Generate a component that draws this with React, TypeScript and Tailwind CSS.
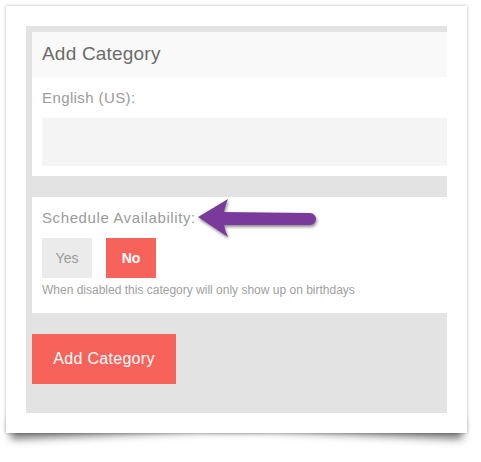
import React from 'react';

function Arrow() {
  return (
    <svg
      width="125"
      height="47"
      viewBox="0 0 125 47"
      className="absolute left-[163px] top-[-2px] drop-shadow-[1px_2px_1.5px_rgba(0,0,0,0.45)]"
    >
      <path
        d="M3 22 L33 4 Q30 11 29 17 L115 18 A6 6 0 0 1 115 30 L29 30 Q30 36 33 42 Z"
        fill="#7a3a9c"
      />
    </svg>
  );
}

export default function App() {
  return (
    <div className="w-[481px] h-[462px] bg-white font-['Liberation_Sans',Arial,sans-serif] pt-[6px] pl-[6px]">
      <div className="relative isolate w-[461px] h-[427px]">
        {/* lifted-corner shadows */}
        <div className="absolute left-[4px] bottom-[8px] w-[55%] h-[20px] -z-10 shadow-[0_14px_8px_rgba(0,0,0,0.55)] -rotate-[2.5deg] origin-left" />
        <div className="absolute right-[4px] bottom-[8px] w-[55%] h-[20px] -z-10 shadow-[0_14px_8px_rgba(0,0,0,0.55)] rotate-[2.5deg] origin-right" />

        <div className="relative h-full bg-white shadow-[0_0_3px_rgba(0,0,0,0.3)] p-5">
          <div className="h-full bg-[#e3e3e3] pl-[6px] pt-[6px] flex flex-col">
            {/* language card */}
            <div className="bg-white">
              <div className="h-[45px] bg-[#f9f9f9] flex items-center px-[10px] text-[19px] tracking-[0.2px] text-[#6b6b6b]">
                Add Category
              </div>
              <div className="pt-[12px] pb-[10px] pl-[10px]">
                <div className="text-[15px] leading-[18px] tracking-[0.4px] text-[#9b9b9b]">English (US):</div>
                <div className="mt-[11px] h-[48px] bg-[#f4f4f4]" />
              </div>
            </div>

            {/* schedule card */}
            <div className="relative mt-[21px] bg-white pt-[12px] pb-[16px] px-[10px]">
              <div className="text-[15px] leading-[18px] tracking-[0.6px] text-[#9b9b9b]">Schedule Availability:</div>
              <div className="mt-[11px] flex gap-[14px]">
                <button className="w-[50px] h-[40px] bg-[#ebebeb] text-[14px] text-[#9a9a9a]">Yes</button>
                <button className="w-[50px] h-[40px] bg-[#f7635a] text-[14px] font-bold text-white">No</button>
              </div>
              <div className="mt-[5px] text-[12px] leading-[14px] text-[#a0a0a0]">
                When disabled this category will only show up on birthdays
              </div>
              <Arrow />
            </div>

            <div className="mt-[21px]">
              <button className="w-[144px] h-[50px] bg-[#f7635a] text-white text-[16px] tracking-[0.3px]">
                Add Category
              </button>
            </div>
          </div>
        </div>
      </div>
    </div>
  );
}
